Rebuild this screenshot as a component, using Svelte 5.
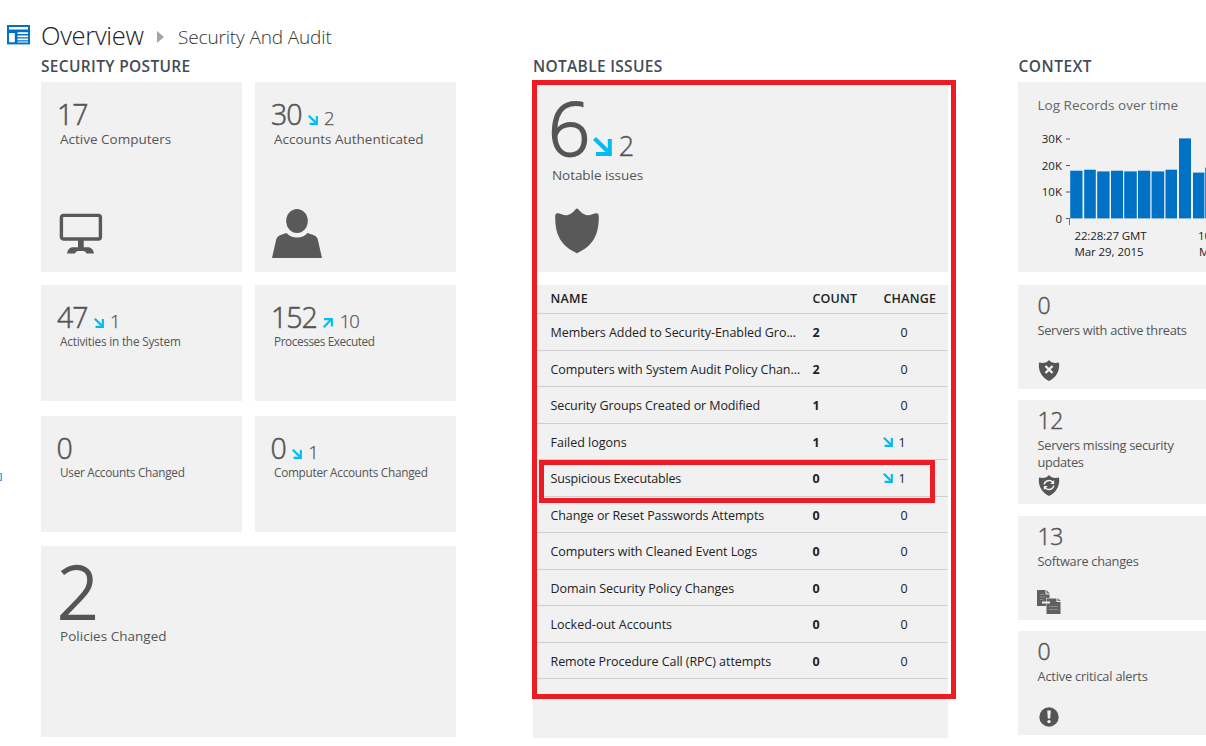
<script>
  // Spreads letters so a label takes a fixed measure, whatever the face's own advance widths are.
  function fit(node, width) {
    const range = document.createRange();
    range.selectNodeContents(node);
    const natural = range.getBoundingClientRect().width;
    node.style.letterSpacing = `${(width + 0.6 - natural) / node.textContent.length}px`;
  }

  const small = [
    { n: '47', d: '1', dir: 'down', label: 'Activities in the System', w: 120, x: 16, gap: 6 },
    { n: '152', d: '10', dir: 'up', label: 'Processes Executed', w: 100, x: 16, gap: 6.5 },
    { n: '0', d: '', dir: '', label: 'User Accounts Changed', w: 124, x: 15.5, gap: 6 },
    { n: '0', d: '1', dir: 'down', label: 'Computer Accounts Changed', w: 153, x: 15.5, gap: 6 }
  ];

  const rows = [
    ['Members Added to Security-Enabled Gro...', 2, 0, 245],
    ['Computers with System Audit Policy Chan...', 2, 0, 249],
    ['Security Groups Created or Modified', 1, 0, 209],
    ['Failed logons', 1, 1, 75.5],
    ['Suspicious Executables', 0, 1, 130],
    ['Change or Reset Passwords Attempts', 0, 0, 213],
    ['Computers with Cleaned Event Logs', 0, 0, 206],
    ['Domain Security Policy Changes', 0, 0, 183],
    ['Locked-out Accounts', 0, 0, 121],
    ['Remote Procedure Call (RPC) attempts', 0, 0, 220]
  ];

  const bars = [
    [1070.2, 12.3, 170.7], [1084.2, 11.6, 169.7], [1097.2, 12.4, 171.4], [1111, 12, 170.7],
    [1124.2, 12.6, 171.4], [1138, 12.3, 170.7], [1151.6, 12.6, 171.4], [1165.5, 11.5, 169.7],
    [1179, 12, 138.4], [1193, 11.4, 172.6], [1205.2, 12, 167.6]
  ];

  const ticks = [['30K', 139], ['20K', 165.5], ['10K', 192], ['0', 218.5]];

  const context = [
    { n: '0', lines: [['Servers with active threats', 148.5]], icon: 'threat' },
    { n: '12', lines: [['Servers missing security', 135.5], ['updates', 45.5]], icon: 'update' },
    { n: '13', lines: [['Software changes', 100.5]], icon: 'files' },
    { n: '0', lines: [['Active critical alerts', 109.5]], icon: 'alert' }
  ];
</script>

{#snippet arrow(dir, size)}
  <svg class="arrow" class:up={dir === 'up'} width={size} height={size} viewBox="0 0 19 19">
    <path d="M1.5 1.5L15 14.5" stroke-width="4.2" />
    <path d="M16.8 2V16.9H3" stroke-width="4" />
  </svg>
{/snippet}

<div class="page">
  <span class="edge"></span>
  <header>
    <svg width="23" height="20" viewBox="0 0 23 20">
      <rect x="0" y="0" width="23" height="19.4" fill="#0072c6" />
      <path d="M2 2H21V4.4H2ZM2 8H7.8V17.2H2ZM10.5 7.2H21V9H10.5ZM10.5 10.6H21V12.2H10.5ZM10.5 13.6H21V15.2H10.5ZM10.5 16.4H21V17.6H10.5Z" fill="#fff" />
    </svg>
    <h1><span use:fit={102}>Overview</span></h1>
    <svg class="chev" width="7" height="12" viewBox="0 0 7 12"><path d="M0 0L7 6L0 12Z" fill="#a5a5a5" /></svg>
    <h2><span use:fit={153}>Security And Audit</span></h2>
  </header>

  <main>
    <section class="posture">
      <h3><span use:fit={149}>SECURITY POSTURE</span></h3>
      <div class="grid">
        <div class="tile tall">
          <div class="num" style:padding-left="16px">17</div>
          <div class="label"><span use:fit={110.5}>Active Computers</span></div>
          <svg class="monitor" width="44" height="42" viewBox="0 0 44 42">
            <rect x="2.4" y="2.4" width="39" height="23.6" rx="2" fill="none" stroke="#595959" stroke-width="3.4" />
            <path d="M19 27H24.7V34.3H30Q34 35 35 40.5H27.5Q27 38 24.5 38H19.5Q16.5 38 16 40.5H8Q9 35 13 34.3H19Z" fill="#595959" />
          </svg>
        </div>
        <div class="tile tall">
          <div class="num" style:padding-left="16px">30<span class="delta" style:margin-left="6px">{@render arrow('down', 10)}<i>2</i></span></div>
          <div class="label"><span use:fit={149}>Accounts Authenticated</span></div>
          <svg class="person" width="50" height="50" viewBox="0 0 50 50">
            <ellipse cx="25" cy="12" rx="10.8" ry="12" fill="#595959" />
            <path d="M0 49L4.3 30Q5.2 27.2 8 26.2L14.5 24Q18.5 28.5 25 28.5Q31.5 28.5 35.5 24L42 26.2Q44.8 27.2 45.7 30L50 49Z" fill="#595959" />
          </svg>
        </div>
        {#each small as t}
          <div class="tile short">
            <div class="num" style:padding-left="{t.x}px">{t.n}{#if t.d}<span class="delta" style:margin-left="{t.gap}px">{@render arrow(t.dir, 10)}<i>{t.d}</i></span>{/if}</div>
            <div class="label"><span use:fit={t.w}>{t.label}</span></div>
          </div>
        {/each}
      </div>
      <div class="tile wide">
        <div class="big">2</div>
        <div class="label"><span use:fit={106}>Policies Changed</span></div>
      </div>
    </section>

    <section class="issues">
      <h3><span use:fit={129}>NOTABLE ISSUES</span></h3>
      <div class="tile summary">
        <div class="big">6<span class="delta">{@render arrow('down', 19)}<i>2</i></span></div>
        <div class="label"><span use:fit={90.5}>Notable issues</span></div>
        <svg class="shield" width="44" height="46" viewBox="0 0 44 46">
          <path d="M22 0.5C24 1 26 5.5 31 7C35 8.2 38 5.3 42 5.3Q43.8 5.5 43.8 9C43.8 27 38 38 22 45.2C6 38 0.2 27 0.2 9Q0.2 5.5 2 5.3C6 5.3 9 8.2 13 7C18 5.5 20 1 22 0.5Z" fill="#595959" />
        </svg>
      </div>
      <div class="table">
        <div class="row head">
          <b><span use:fit={37}>NAME</span></b><b><span use:fit={44}>COUNT</span></b><b><span use:fit={52}>CHANGE</span></b>
        </div>
        {#each rows as [name, count, change, w]}
          <div class="row">
            <span><span use:fit={w}>{name}</span></span>
            <strong>{count}</strong>
            <span class="change">{#if change}{@render arrow('down', 10)}<i>1</i>{:else}<i class="zero">0</i>{/if}</span>
          </div>
        {/each}
      </div>
      <span class="mark outer"></span>
      <span class="mark inner"></span>
    </section>

    <section class="context">
      <h3><span use:fit={73}>CONTEXT</span></h3>
      <div class="tile">
        <svg class="chart" width="188" height="190" viewBox="1018 82 188 190">
          <text x="1037.5" y="110.3" font-size="13.5" fill="#666" textLength="140.5">Log Records over time</text>
          {#each ticks as [t, y]}
            <text x="1062" y={y + 4.3} text-anchor="end" class="axis">{t}</text>
            <path d="M1066 {y}H1070" stroke="#555" />
          {/each}
          <path d="M1069.5 218V225" stroke="#777" />
          {#each bars as [x, w, y]}
            <rect {x} {y} width={w} height={218.4 - y} fill="#0072c6" />
          {/each}
          <text class="axis" x="1074.5" y="240.3" textLength="72">22:28:27 GMT</text>
          <text class="axis" x="1074.5" y="256.2" textLength="69">Mar 29, 2015</text>
          <text class="axis" x="1198" y="240.3">10:28:27 GMT</text>
          <text class="axis" x="1199" y="256.2">Mar 30, 2015</text>
        </svg>
      </div>
      <div class="items">
        {#each context as c}
          <div class="tile item">
            <div class="count">{c.n}</div>
            <div class="lines">
              {#each c.lines as [text, w]}<div><span use:fit={w}>{text}</span></div>{/each}
            </div>
            <svg width="24" height="26" viewBox="0 0 24 26">
              {#if c.icon === 'threat' || c.icon === 'update'}
                <path d="M12 2Q15 6 22 4.5Q23.5 17 12 23Q0.5 17 2 4.5Q9 6 12 2Z" fill="#555" />
              {/if}
              {#if c.icon === 'threat'}
                <path d="M8.5 8L15.5 15M15.5 8L8.5 15" stroke="#f1f1f1" stroke-width="2.4" />
              {:else if c.icon === 'update'}
                <path d="M7.2 11.5A5 4.5 0 0 1 15.8 9M16.8 12.5A5 4.5 0 0 1 8.2 15" fill="none" stroke="#f1f1f1" stroke-width="1.5" />
                <path d="M17.2 7V11H13.2ZM6.8 17V13H10.8Z" fill="#f1f1f1" />
              {:else if c.icon === 'files'}
                <path d="M0 1H8.5V5.5H12.5V9H9V17H0Z" fill="#606060" />
                <path d="M9.5 1L13 4.5H9.5Z" fill="#777" />
                <path d="M3 5.5H7M3 8H9M3 10.500H6" stroke="#8a8a8a" />
                <path d="M9.5 9.5H19.5V13H23.5V25H9.5Z" fill="#606060" />
                <path d="M20.500 9L24 12H20.500Z" fill="#777" />
                <path d="M5 13.500H13" stroke="#f1f1f1" stroke-width="2" />
                <path d="M12 17.500H21M12 20.500H21" stroke="#8a8a8a" />
              {:else}
                <circle cx="12" cy="13" r="9.7" fill="#555" />
                <path d="M10.2 6.500H13.800L13.200 14.500H10.800Z" fill="#f1f1f1" />
                <circle cx="12" cy="17.600" r="1.700" fill="#f1f1f1" />
              {/if}
            </svg>
          </div>
        {/each}
      </div>
    </section>
  </main>
</div>

<style>
  :global(body) { margin: 0; background: #fff; }
  .page { position: relative; width: 1206px; height: 746px; overflow: hidden; font-family: "Open Sans", "Noto Sans", sans-serif; color: #555; }
  .page * { box-sizing: border-box; }
  .page span { white-space: nowrap; }
  svg { display: block; flex: none; }
  i { font-style: normal; }
  h1, h2, h3 { margin: 0; }
  header { display: flex; align-items: flex-start; height: 57px; padding: 25px 0 0 7px; }
  h1 { margin-left: 11px; font-size: 25.5px; font-weight: 300; line-height: 20px; color: #222; width: 116px; }
  h2 { margin-left: 14px; font-size: 19px; font-weight: 300; line-height: 24px; color: #333; }
  .chev { margin-top: 6px; }
  main { display: grid; grid-template-columns: 415px 415px 188px; column-gap: 77px; padding-left: 41px; }
  h3 { height: 25px; font-size: 15.5px; font-weight: 600; line-height: 18px; color: #434c56; }
  .tile { background: #f1f1f1; }
  .grid { display: grid; grid-template-columns: 201px 201px; column-gap: 13px; grid-template-rows: 190px 116px 118px; row-gap: 13px; height: 464px; }
  .grid .tile:nth-child(n + 5) { margin-top: 2px; }
  .num { display: flex; align-items: baseline; padding-top: 12px; height: 49px; font-size: 28.5px; line-height: 40px; letter-spacing: -1px; font-weight: 300; -webkit-text-stroke: 0.55px #555; }
  .delta { display: flex; align-items: baseline; font-size: 18.5px; line-height: 24px; -webkit-text-stroke-width: 0.25px; }
  .delta i { margin-left: 6.5px; }
  .arrow { fill: none; stroke: #00bcf2; }
  .arrow.up { transform: rotate(-90deg); }
  .label { padding-left: 19px; font-size: 13.5px; line-height: 16px; }
  .short .num { height: 48px; }
  .short .label { font-size: 11.8px; }
  .monitor { margin: 66px 0 0 18px; }
  .person { margin: 62px 0 0 17px; }
  .wide { height: 191px; }
  .big { display: flex; align-items: baseline; height: 82px; padding-left: 16px; font-size: 74px; line-height: 90px; font-weight: 300; letter-spacing: -4px; -webkit-text-stroke: 1.8px #555; }
  .summary .big { height: 85px; padding: 1px 0 0 15px; }
  .summary .delta { margin-left: 7px; font-size: 27px; letter-spacing: 0; -webkit-text-stroke-width: 0.4px; }
  .shield { margin: 25px 0 0 21.5px; }
  .issues { position: relative; }
  .summary { height: 190px; }
  .table { margin-top: 13px; height: 453px; background: #f1f1f1; font-size: 12.5px; color: #222; }
  .row { display: grid; grid-template-columns: 262px 71px 60px; padding-left: 17.5px; height: 36.55px; line-height: 37.4px; border-bottom: 1px solid #cfcfcf; }
  .row.head { height: 29px; line-height: 28px; color: #222; }
  .head b { font-weight: 600; }
  .row strong { font-weight: 700; }
  .change { display: flex; align-items: baseline; }
  .change .arrow { margin-left: -1px; }
  .change i { margin-left: 6px; }
  .change i.zero { margin-left: 17px; }
  .mark { position: absolute; border: 5px solid #ed1c24; }
  .outer { left: -1px; top: 23px; width: 424px; height: 619px; }
  .inner { left: 6px; top: 403px; width: 396px; height: 43px; }
  .context { margin-left: -7px; width: 195px; }
  .context h3 { padding-left: 0.5px; }
  .chart { font-family: "Open Sans", "Noto Sans", sans-serif; }
  .axis { font-size: 11.5px; fill: #222; }
  .items { display: flex; flex-direction: column; gap: 11.4px; padding-top: 13px; }
  .item { height: 104px; padding: 9px 0 0 19.5px; }
  .count { height: 28px; font-size: 23px; line-height: 22px; font-weight: 300; letter-spacing: -0.5px; -webkit-text-stroke: 0.45px #555; }
  .lines { height: 36px; font-size: 12.8px; line-height: 17px; }
  .item svg { margin-left: -0.5px; }
  .edge { position: absolute; left: -6px; top: 473px; width: 8px; height: 8px; border: 1px solid #5b9bd5; background: #b9dcf0; }
</style>
